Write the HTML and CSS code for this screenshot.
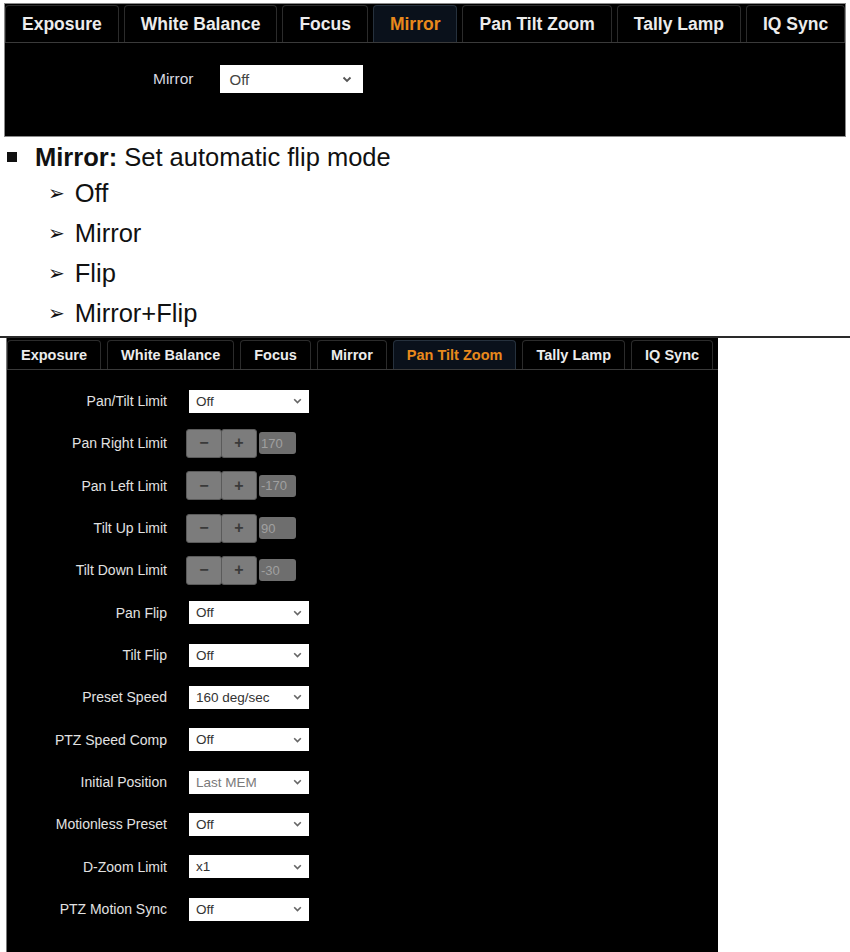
FILE: index.html
```html
<!DOCTYPE html>
<html>
<head>
<meta charset="utf-8">
<link rel="stylesheet" href="styles.css">
</head>
<body>
<div class="panel panel-top">
  <div class="tabs tabs-lg">
    <div class="tab">Exposure</div>
    <div class="tab">White Balance</div>
    <div class="tab">Focus</div>
    <div class="tab active">Mirror</div>
    <div class="tab">Pan Tilt Zoom</div>
    <div class="tab">Tally Lamp</div>
    <div class="tab">IQ Sync</div>
  </div>
  <div class="mirror-row">
    <span class="lbl-lg">Mirror</span>
    <div class="sel sel-lg"><span>Off</span><svg class="chev" width="10" height="7" viewBox="0 0 10 7"><path d="M1.5 1.5 L5 5 L8.5 1.5" fill="none" stroke="#555" stroke-width="1.8"/></svg></div>
  </div>
</div>

<div class="doc">
  <div class="bullet"><span class="sq"></span><b>Mirror:</b>&nbsp;Set automatic flip mode</div>
  <ul class="sub">
    <li><span class="arr">➢</span>Off</li>
    <li><span class="arr">➢</span>Mirror</li>
    <li><span class="arr">➢</span>Flip</li>
    <li><span class="arr">➢</span>Mirror+Flip</li>
  </ul>
</div>

<div class="rule"></div>

<div class="panel panel-ptz">
  <div class="tabs tabs-sm">
    <div class="tab">Exposure</div>
    <div class="tab">White Balance</div>
    <div class="tab">Focus</div>
    <div class="tab">Mirror</div>
    <div class="tab active">Pan Tilt Zoom</div>
    <div class="tab">Tally Lamp</div>
    <div class="tab">IQ Sync</div>
  </div>
  <div class="form">
    <div class="lbl">Pan/Tilt Limit</div>
    <div class="sel"><span>Off</span><svg class="chev" width="9" height="6" viewBox="0 0 9 6"><path d="M1.2 1.2 L4.5 4.5 L7.8 1.2" fill="none" stroke="#666" stroke-width="1.6"/></svg></div>

    <div class="lbl">Pan Right Limit</div>
    <div class="stepper"><div class="btn">&minus;</div><div class="btn">+</div><div class="val">170</div></div>

    <div class="lbl">Pan Left Limit</div>
    <div class="stepper"><div class="btn">&minus;</div><div class="btn">+</div><div class="val">-170</div></div>

    <div class="lbl">Tilt Up Limit</div>
    <div class="stepper"><div class="btn">&minus;</div><div class="btn">+</div><div class="val">90</div></div>

    <div class="lbl">Tilt Down Limit</div>
    <div class="stepper"><div class="btn">&minus;</div><div class="btn">+</div><div class="val">-30</div></div>

    <div class="lbl">Pan Flip</div>
    <div class="sel"><span>Off</span><svg class="chev" width="9" height="6" viewBox="0 0 9 6"><path d="M1.2 1.2 L4.5 4.5 L7.8 1.2" fill="none" stroke="#666" stroke-width="1.6"/></svg></div>

    <div class="lbl">Tilt Flip</div>
    <div class="sel"><span>Off</span><svg class="chev" width="9" height="6" viewBox="0 0 9 6"><path d="M1.2 1.2 L4.5 4.5 L7.8 1.2" fill="none" stroke="#666" stroke-width="1.6"/></svg></div>

    <div class="lbl">Preset Speed</div>
    <div class="sel"><span>160 deg/sec</span><svg class="chev" width="9" height="6" viewBox="0 0 9 6"><path d="M1.2 1.2 L4.5 4.5 L7.8 1.2" fill="none" stroke="#666" stroke-width="1.6"/></svg></div>

    <div class="lbl">PTZ Speed Comp</div>
    <div class="sel"><span>Off</span><svg class="chev" width="9" height="6" viewBox="0 0 9 6"><path d="M1.2 1.2 L4.5 4.5 L7.8 1.2" fill="none" stroke="#666" stroke-width="1.6"/></svg></div>

    <div class="lbl">Initial Position</div>
    <div class="sel dim"><span>Last MEM</span><svg class="chev" width="9" height="6" viewBox="0 0 9 6"><path d="M1.2 1.2 L4.5 4.5 L7.8 1.2" fill="none" stroke="#666" stroke-width="1.6"/></svg></div>

    <div class="lbl">Motionless Preset</div>
    <div class="sel"><span>Off</span><svg class="chev" width="9" height="6" viewBox="0 0 9 6"><path d="M1.2 1.2 L4.5 4.5 L7.8 1.2" fill="none" stroke="#666" stroke-width="1.6"/></svg></div>

    <div class="lbl">D-Zoom Limit</div>
    <div class="sel"><span>x1</span><svg class="chev" width="9" height="6" viewBox="0 0 9 6"><path d="M1.2 1.2 L4.5 4.5 L7.8 1.2" fill="none" stroke="#666" stroke-width="1.6"/></svg></div>

    <div class="lbl">PTZ Motion Sync</div>
    <div class="sel"><span>Off</span><svg class="chev" width="9" height="6" viewBox="0 0 9 6"><path d="M1.2 1.2 L4.5 4.5 L7.8 1.2" fill="none" stroke="#666" stroke-width="1.6"/></svg></div>
  </div>
</div>
</body>
</html>
```

FILE: styles.css
```css
html, body {
  margin: 0;
  padding: 0;
  background: #fff;
  font-family: "Liberation Sans", Arial, sans-serif;
  overflow: hidden;
}

.panel {
  background: #000;
  box-sizing: border-box;
}

.panel-top {
  margin: 3px 0 0 4px;
  width: 842px;
  height: 134px;
  border: 1px solid #8a8a8a;
}

.tabs {
  display: flex;
  border-bottom: 1px solid #3a3a3a;
}

.tab {
  color: #ececec;
  font-weight: bold;
  border: 1px solid #2b2b2b;
  border-bottom: none;
  border-radius: 4px 4px 0 0;
  display: flex;
  align-items: center;
  justify-content: center;
  box-sizing: border-box;
  white-space: nowrap;
  flex-shrink: 0;
}

.tab.active {
  color: #e8891c;
  background: #0a111b;
  border-color: #26313d;
}

.tabs-lg {
  height: 37px;
  gap: 5px;
  padding-top: 1px;
}

.tabs-lg .tab {
  font-size: 17.5px;
  padding: 0 16px;
}

.mirror-row {
  display: flex;
  align-items: center;
  padding: 22px 0 0 148px;
}

.lbl-lg {
  color: #d8d8e0;
  font-size: 15.5px;
  margin-right: 27px;
}

.sel {
  background: #fff;
  width: 120px;
  height: 23px;
  box-sizing: border-box;
  display: flex;
  align-items: center;
  justify-content: space-between;
  padding: 0 7px 0 7px;
  color: #333;
  font-size: 13.5px;
}

.sel.dim {
  color: #7a7a7a;
}

.sel-lg {
  width: 143px;
  height: 28px;
  font-size: 15px;
  padding: 0 11px 0 9px;
  color: #444;
}

.doc {
  padding: 2px 0 0 7px;
  color: #111;
  font-size: 25.5px;
}

.bullet {
  display: flex;
  align-items: center;
  line-height: 36px;
}

.sq {
  width: 10px;
  height: 10px;
  background: #111;
  margin-right: 18px;
}

.sub {
  list-style: none;
  margin: -2px 0 0 0;
  padding: 0 0 0 41px;
}

.sub li {
  line-height: 40px;
  display: flex;
  align-items: center;
}

.arr {
  font-family: "DejaVu Sans", sans-serif;
  font-size: 20px;
  line-height: 1;
  margin-right: 10px;
}

.rule {
  margin-top: 3px;
  height: 2px;
  background: #2a2a2a;
}

.panel-ptz {
  margin: 0 0 0 6px;
  width: 712px;
  height: 620px;
  border-left: 1px solid #777;
}

.tabs-sm {
  height: 32px;
  gap: 6px;
  padding-top: 2px;
  box-sizing: border-box;
}

.tabs-sm .tab {
  font-size: 14.5px;
  padding: 0 13px;
}

.form {
  display: grid;
  grid-template-columns: 160px auto;
  grid-auto-rows: 42.33px;
  column-gap: 22px;
  align-items: center;
  justify-items: start;
  padding-top: 10px;
}

.lbl {
  justify-self: end;
  color: #e2e2e2;
  font-size: 14px;
}

.stepper {
  display: flex;
  align-items: center;
  margin-left: -3px;
}

.btn {
  width: 36px;
  height: 29px;
  background: #7c7c7c;
  border: 1px solid #5a5a5a;
  border-radius: 3px;
  box-sizing: border-box;
  display: flex;
  align-items: center;
  justify-content: center;
  color: #3a3a3a;
  font-weight: bold;
  font-size: 16px;
}

.btn + .btn {
  margin-left: -1px;
}

.val {
  width: 37px;
  height: 22px;
  margin-left: 2px;
  background: #6e6e6e;
  border-radius: 3px;
  color: #a0a0a0;
  font-size: 13px;
  display: flex;
  align-items: center;
  padding-left: 2px;
  box-sizing: border-box;
}
```
